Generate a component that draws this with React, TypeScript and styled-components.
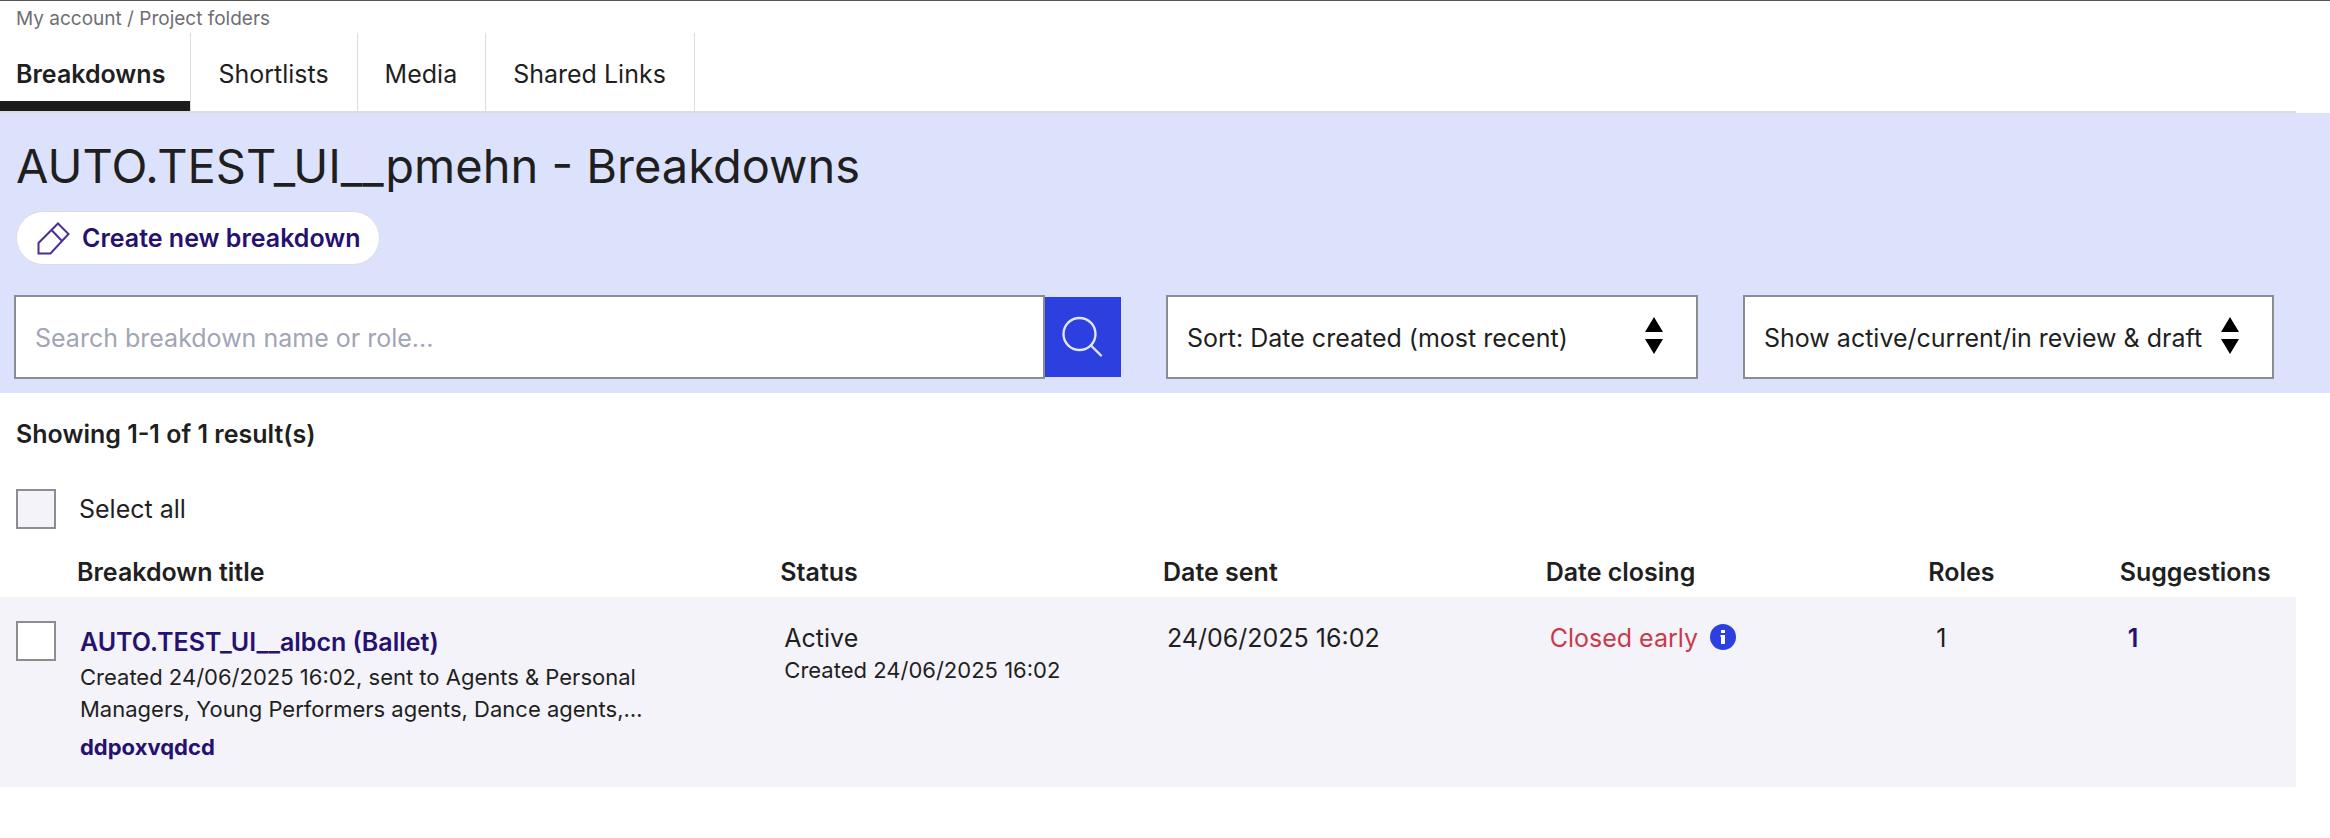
import React from "react";
import styled, { createGlobalStyle } from "styled-components";

const ink = "#1f1f1f";
const indigo = "#26116f";
const blue = "#2c3fdf";
const outline = "#8c8c93";
const hairline = "#dcdcdf";

const GlobalStyle = createGlobalStyle`
  *, *::before, *::after { box-sizing: border-box; }
  body {
    margin: 0;
    background: #fff;
    color: ${ink};
    font: 400 25px/32px Inter, "Liberation Sans", sans-serif;
  }
  button, input, select { font: inherit; color: inherit; }
  a { color: inherit; text-decoration: none; }
  h1, p, ul { margin: 0; padding: 0; }
`;

const Page = styled.div`
  border-top: 1px solid #555;
`;

const Breadcrumb = styled.nav`
  padding: 4px 0 0 16px;
  font-size: 19px;
  line-height: 28px;
  color: #6e6e73;
`;

const Tabs = styled.nav`
  margin-right: 34px;
  border-bottom: 2px solid ${hairline};
`;

const TabList = styled.ul`
  display: flex;
  list-style: none;
`;

const TabItem = styled.li`
  border-right: 1px solid ${hairline};
`;

const Tab = styled.a<{ $active?: boolean }>`
  display: block;
  padding: 25px ${(p) => (p.$active ? 25 : 28)}px 11px ${(p) => (p.$active ? 16 : 27)}px;
  border-bottom: 10px solid ${(p) => (p.$active ? "#1b1b1b" : "transparent")};
  font-weight: ${(p) => (p.$active ? 600 : 400)};
`;

const Hero = styled.header`
  padding: 25px 56px 14px 14px;
  background: #dde2fc;
`;

const Title = styled.h1`
  font-size: 47px;
  line-height: 56px;
  font-weight: 400;
  padding-left: 2px;
`;

const PillButton = styled.button`
  display: flex;
  align-items: center;
  gap: 12px;
  height: 54px;
  margin: 17px 0 30px 2px;
  padding: 0 18px 0 20px;
  border: 1px solid #dcdce2;
  border-radius: 27px;
  background: #fff;
  color: ${indigo};
  font-weight: 600;
`;

const Filters = styled.form`
  display: grid;
  grid-template-columns: 1107fr 532fr 531fr;
  gap: 45px;
`;

const SearchBox = styled.div`
  display: flex;
  align-items: center;
`;

const SearchInput = styled.input`
  flex: 1;
  min-width: 0;
  height: 84px;
  padding: 2px 20px 0 19px;
  border: 2px solid ${outline};
  border-radius: 0;
  background: #fff;
  &::placeholder { color: #a1a5b5; opacity: 1; }
`;

const SearchButton = styled.button`
  display: grid;
  place-items: center;
  width: 76px;
  height: 80px;
  padding: 0;
  border: 0;
  background: ${blue};
  color: #e2e5fb;
`;

const SelectBox = styled.div`
  position: relative;
  svg {
    position: absolute;
    right: 35px;
    top: 22px;
    pointer-events: none;
  }
`;

const Select = styled.select`
  appearance: none;
  width: 100%;
  height: 84px;
  padding: 2px 60px 0 19px;
  border: 2px solid ${outline};
  border-radius: 0;
  background: #fff;
`;

const Results = styled.main`
  padding-top: 25px;
  margin-right: 34px;
`;

const Count = styled.p`
  padding-left: 16px;
  font-weight: 600;
`;

const SelectAll = styled.label`
  display: flex;
  align-items: center;
  gap: 23px;
  margin: 39px 0 0 16px;
`;

const Checkbox = styled.input<{ $tinted?: boolean }>`
  appearance: none;
  flex: none;
  width: 40px;
  height: 40px;
  margin: 0;
  border: 2px solid ${outline};
  background: ${(p) => (p.$tinted ? "#f4f3f9" : "#fff")};
`;

const Table = styled.table`
  width: 100%;
  table-layout: fixed;
  border-collapse: collapse;
`;

const HeadCell = styled.th<{ $span: number; $first?: boolean }>`
  width: ${(p) => (p.$span * 100) / 12}%;
  padding: 27px 0 9px ${(p) => (p.$first ? 77 : 15)}px;
  text-align: left;
  font-weight: 600;
  white-space: nowrap;
`;

const Row = styled.tr`
  background: #f4f3f9;
`;

const Cell = styled.td<{ $numeric?: boolean }>`
  padding: 25px 0 24px ${(p) => (p.$numeric ? 23 : 19)}px;
  vertical-align: top;
`;

const TitleCell = styled(Cell)`
  padding: 24px 0 24px 16px;
`;

const Entry = styled.div`
  display: flex;
  gap: 24px;
`;

const EntryText = styled.div`
  padding-top: 5px;
  max-width: 580px;
`;

const StrongLink = styled.a<{ $small?: boolean }>`
  font-size: ${(p) => (p.$small ? 22 : 25)}px;
  font-weight: ${(p) => (p.$small ? 700 : 600)};
  color: ${indigo};
`;

const Note = styled.p`
  font-size: 22px;
`;

const EntryNote = styled(Note)`
  padding: 3px 0 5px;
`;

const Closed = styled.div`
  display: flex;
  align-items: center;
  gap: 12px;
  color: #c93a4b;
`;

const InfoButton = styled.button`
  display: flex;
  padding: 0 0 3px;
  border: 0;
  background: none;
`;

const PencilIcon = () => (
  <svg width="33" height="33" viewBox="0 0 33 33" fill="none" stroke="#4a3191" strokeWidth="2" aria-hidden="true">
    <path d="M21 1.5 31.5 12 13.5 31.5H1.5V21ZM14.5 8 25 19" />
  </svg>
);

const SearchIcon = () => (
  <svg width="42" height="42" viewBox="0 0 42 42" fill="none" stroke="currentColor" strokeWidth="2.4" strokeLinecap="round" aria-hidden="true">
    <circle cx="17.5" cy="18" r="16" />
    <path d="M29 29.5 39 39.5" />
  </svg>
);

const SortArrows = () => (
  <svg width="18" height="37" viewBox="0 0 18 37" aria-hidden="true">
    <path d="M9 0 18 15H0ZM0 22H18L9 37Z" />
  </svg>
);

const InfoIcon = () => (
  <svg width="26" height="26" viewBox="0 0 26 26" aria-hidden="true">
    <circle cx="13" cy="13" r="13" fill={blue} />
    <path d="M11 6h4v3h-4ZM10.5 11H15v9h-4v-7h-.5Z" fill="#fff" />
  </svg>
);

const tabs = ["Breakdowns", "Shortlists", "Media", "Shared Links"];

export default function App() {
  return (
    <>
      <GlobalStyle />
      <Page>
        <Breadcrumb aria-label="Breadcrumb">
          <a href="#account">My account</a> / <a href="#folders">Project folders</a>
        </Breadcrumb>
        <Tabs aria-label="Project">
          <TabList>
            {tabs.map((name, i) => (
              <TabItem key={name}>
                <Tab href="#tab" $active={i === 0} aria-current={i === 0 ? "page" : undefined}>
                  {name}
                </Tab>
              </TabItem>
            ))}
          </TabList>
        </Tabs>
        <Hero>
          <Title>AUTO.TEST_UI__pmehn - Breakdowns</Title>
          <PillButton type="button">
            <PencilIcon />
            Create new breakdown
          </PillButton>
          <Filters onSubmit={(e) => e.preventDefault()}>
            <SearchBox>
              <SearchInput aria-label="Search breakdowns" placeholder="Search breakdown name or role..." />
              <SearchButton type="submit" aria-label="Search">
                <SearchIcon />
              </SearchButton>
            </SearchBox>
            <SelectBox>
              <Select aria-label="Sort">
                <option>Sort: Date created (most recent)</option>
              </Select>
              <SortArrows />
            </SelectBox>
            <SelectBox>
              <Select aria-label="Show">
                <option>Show active/current/in review &amp; draft</option>
              </Select>
              <SortArrows />
            </SelectBox>
          </Filters>
        </Hero>
        <Results>
          <Count>Showing 1-1 of 1 result(s)</Count>
          <SelectAll>
            <Checkbox type="checkbox" $tinted />
            Select all
          </SelectAll>
          <Table>
            <thead>
              <tr>
                <HeadCell $span={4} $first>Breakdown title</HeadCell>
                <HeadCell $span={2}>Status</HeadCell>
                <HeadCell $span={2}>Date sent</HeadCell>
                <HeadCell $span={2}>Date closing</HeadCell>
                <HeadCell $span={1}>Roles</HeadCell>
                <HeadCell $span={1}>Suggestions</HeadCell>
              </tr>
            </thead>
            <tbody>
              <Row>
                <TitleCell>
                  <Entry>
                    <Checkbox type="checkbox" aria-labelledby="entry-title" />
                    <EntryText>
                      <StrongLink id="entry-title" href="#breakdown">AUTO.TEST_UI__albcn (Ballet)</StrongLink>
                      <EntryNote>
                        Created 24/06/2025 16:02, sent to Agents &amp; Personal Managers, Young Performers agents, Dance agents,…
                      </EntryNote>
                      <StrongLink href="#role" $small>ddpoxvqdcd</StrongLink>
                    </EntryText>
                  </Entry>
                </TitleCell>
                <Cell>
                  Active
                  <Note>Created 24/06/2025 16:02</Note>
                </Cell>
                <Cell>24/06/2025 16:02</Cell>
                <Cell>
                  <Closed>
                    Closed early
                    <InfoButton type="button" aria-label="Closing information">
                      <InfoIcon />
                    </InfoButton>
                  </Closed>
                </Cell>
                <Cell $numeric>1</Cell>
                <Cell $numeric>
                  <StrongLink href="#suggestions">1</StrongLink>
                </Cell>
              </Row>
            </tbody>
          </Table>
        </Results>
      </Page>
    </>
  );
}
